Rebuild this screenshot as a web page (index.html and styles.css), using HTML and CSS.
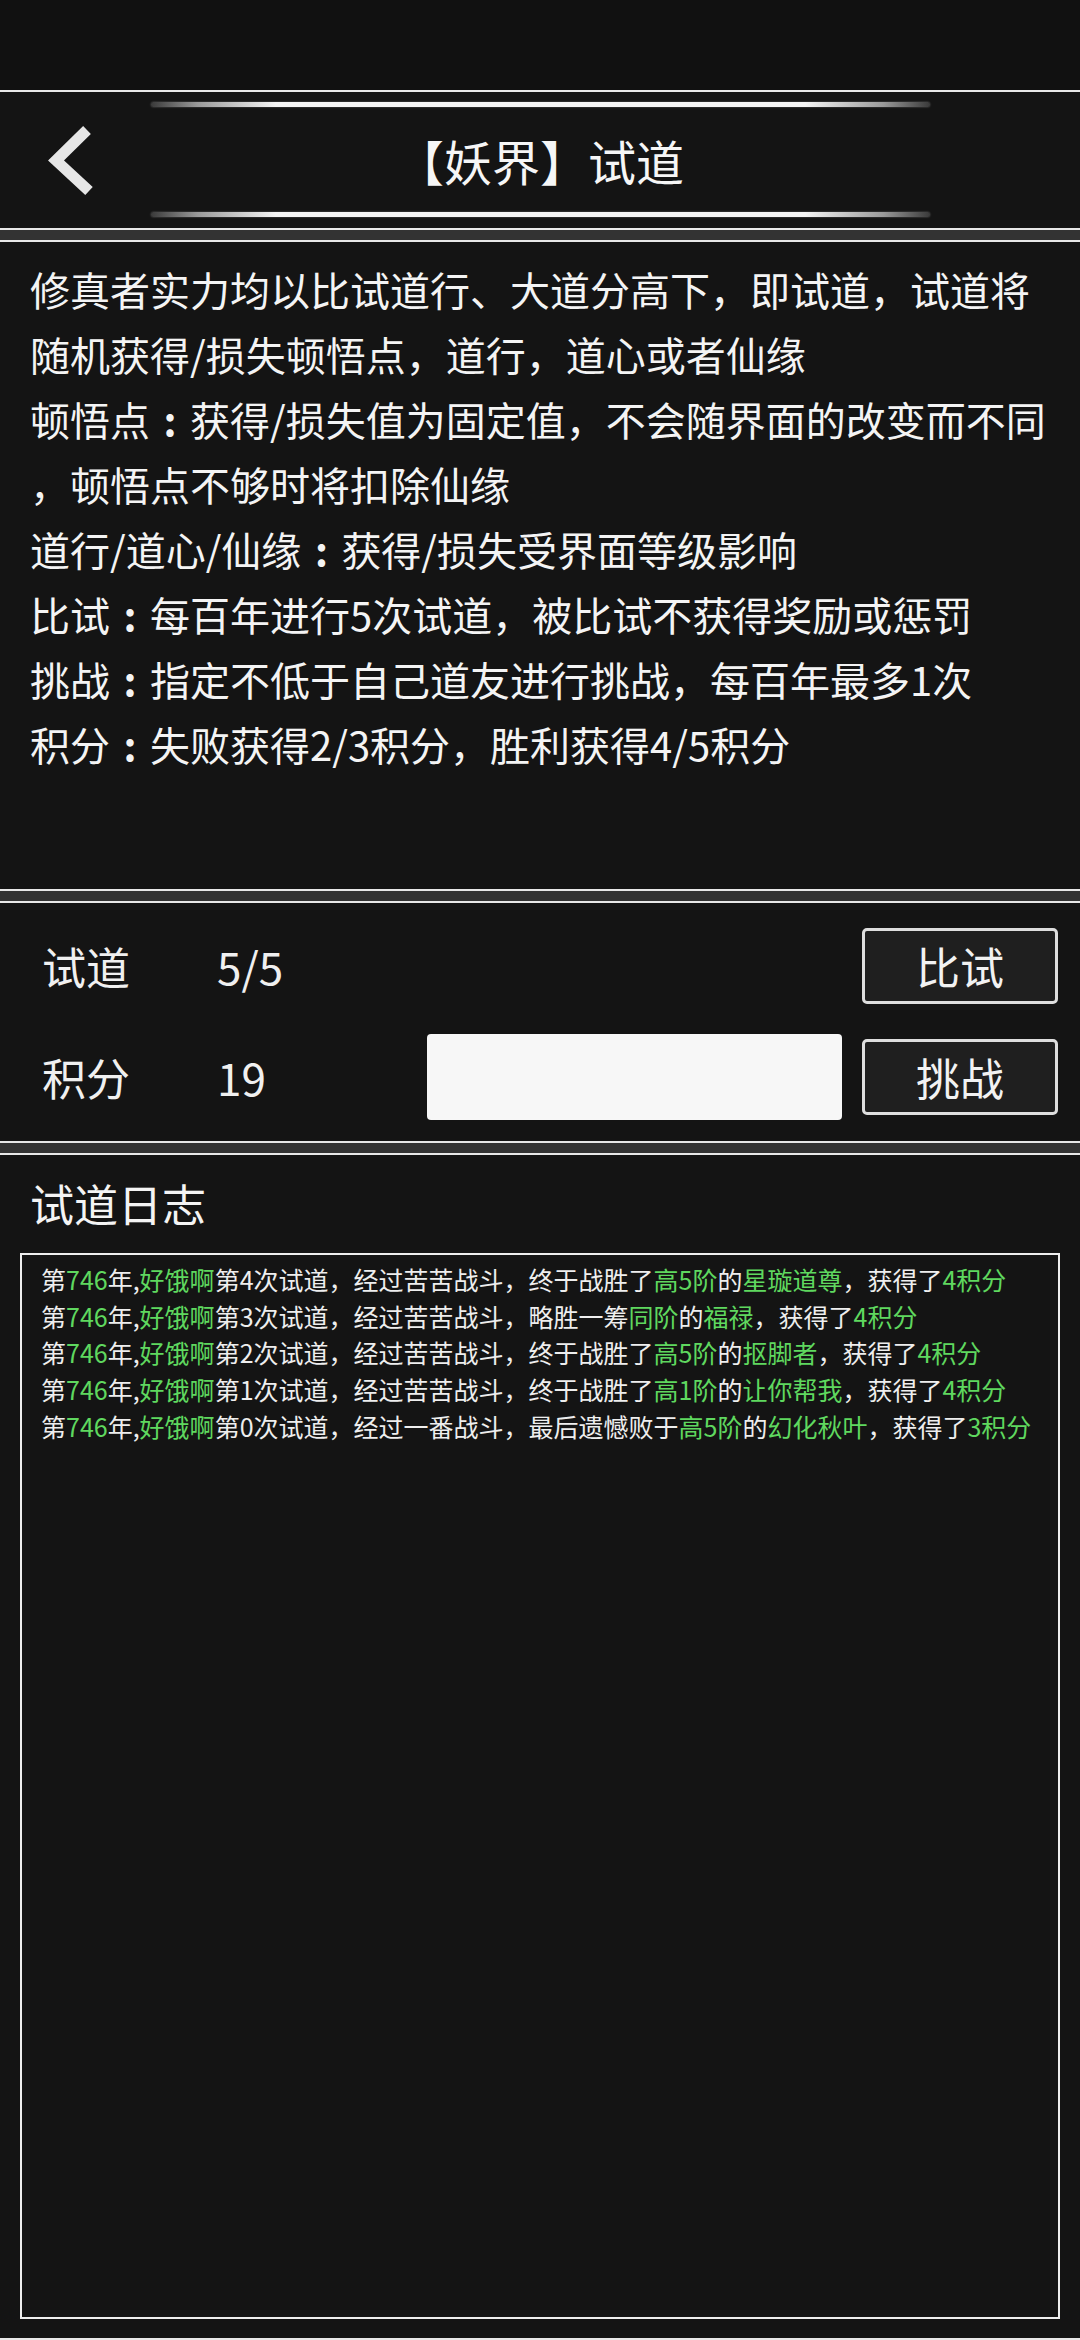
FILE: index.html
```html
<!DOCTYPE html>
<html lang="zh-CN">
<head>
  <meta charset="UTF-8">
  <meta name="viewport" content="width=device-width, initial-scale=1.0">
  <title>【妖界】试道</title>
  <link rel="stylesheet" href="styles.css">
</head>
<body>
  <div class="status-bar"></div>
  <div class="screen">
    <header class="panel title-panel">
      <div class="glow-line"></div>
      <div class="title-row">
        <svg class="back" width="60" height="80" viewBox="0 0 60 80">
          <polyline points="49,10 18,40.5 51,71" fill="none" stroke="#e6e6e6" stroke-width="11" stroke-linejoin="miter"/>
        </svg>
        <h1>【妖界】试道</h1>
        <span></span>
      </div>
      <div class="glow-line"></div>
    </header>

    <section class="panel rules">
      <p>修真者实力均以比试道行、大道分高下，即试道，试道将</p>
      <p>随机获得/损失顿悟点，道行，道心或者仙缘</p>
      <p>顿悟点<span class="colon">:</span>获得/损失值为固定值，不会随界面的改变而不同</p>
      <p>，顿悟点不够时将扣除仙缘</p>
      <p>道行/道心/仙缘<span class="colon">:</span>获得/损失受界面等级影响</p>
      <p>比试<span class="colon">:</span>每百年进行5次试道，被比试不获得奖励或惩罚</p>
      <p>挑战<span class="colon">:</span>指定不低于自己道友进行挑战，每百年最多1次</p>
      <p>积分<span class="colon">:</span>失败获得2/3积分，胜利获得4/5积分</p>
    </section>

    <section class="panel stats">
      <div class="stat-row">
        <span class="stat-label">试道</span>
        <span class="stat-value">5/5</span>
        <button class="action">比试</button>
      </div>
      <div class="stat-row">
        <span class="stat-label">积分</span>
        <span class="stat-value">19</span>
        <input type="text" class="target-input">
        <button class="action">挑战</button>
      </div>
    </section>

    <section class="panel log">
      <h2>试道日志</h2>
      <div class="log-box">
        <p>第<em>746</em>年,<em>好饿啊</em>第4次试道，经过苦苦战斗，终于战胜了<em>高5阶</em>的<em>星璇道尊</em>，获得了<em>4积分</em></p>
        <p>第<em>746</em>年,<em>好饿啊</em>第3次试道，经过苦苦战斗，略胜一筹<em>同阶</em>的<em>福禄</em>，获得了<em>4积分</em></p>
        <p>第<em>746</em>年,<em>好饿啊</em>第2次试道，经过苦苦战斗，终于战胜了<em>高5阶</em>的<em>抠脚者</em>，获得了<em>4积分</em></p>
        <p>第<em>746</em>年,<em>好饿啊</em>第1次试道，经过苦苦战斗，终于战胜了<em>高1阶</em>的<em>让你帮我</em>，获得了<em>4积分</em></p>
        <p>第<em>746</em>年,<em>好饿啊</em>第0次试道，经过一番战斗，最后遗憾败于<em>高5阶</em>的<em>幻化秋叶</em>，获得了<em>3积分</em></p>
      </div>
    </section>
  </div>
</body>
</html>
```

FILE: styles.css
```css
body {
  margin: 0;
  width: 1080px;
  height: 2340px;
  overflow: hidden;
  background: #111;
  color: #f0f0f0;
  font-family: "Noto Sans CJK SC", "Noto Sans", sans-serif;
  display: flex;
  flex-direction: column;
}
.status-bar {
  height: 90px;
  background: #111;
}
.screen {
  flex: 1;
  display: flex;
  flex-direction: column;
  gap: 10px;
  background: #333;
}
.panel {
  background: #141414;
  border-top: 2px solid #e8e8e8;
  border-bottom: 2px solid #e8e8e8;
  box-sizing: border-box;
}

/* header */
.title-panel {
  height: 140px;
  padding: 10px 0 11px;
  display: flex;
  flex-direction: column;
}
.glow-line {
  width: 779px;
  height: 5px;
  margin: 0 auto;
  border-radius: 3px;
  background: linear-gradient(90deg, #3a3a3a 0%, #9a9a9a 6%, #f4f4f4 16%, #f4f4f4 84%, #9a9a9a 94%, #3a3a3a 100%);
  box-shadow: 0 0 2px rgba(255, 255, 255, 0.35);
}
.title-row {
  flex: 1;
  display: grid;
  grid-template-columns: 1fr auto 1fr;
  align-items: center;
}
.back {
  display: block;
  margin-left: 38px;
}
h1 {
  margin: 0;
  font-size: 48px;
  font-weight: 400;
  color: #f6f6f6;
  line-height: 60px;
}

/* rules */
.rules {
  height: 651px;
  padding: 15px 30px 0;
}
.rules p {
  margin: 0;
  font-size: 40px;
  line-height: 65px;
  white-space: nowrap;
  color: #f4f4f4;
}
.colon {
  display: inline-block;
  width: 1em;
  text-align: center;
  font-weight: 700;
}

/* stats */
.stats {
  height: 242px;
  padding: 25px 22px 0 42px;
  display: flex;
  flex-direction: column;
  gap: 30px;
}
.stat-row {
  display: flex;
  align-items: center;
}
.stat-label {
  width: 175px;
  font-size: 44px;
  line-height: 60px;
}
.stat-value {
  flex: 1;
  font-size: 44px;
  line-height: 60px;
}
.target-input {
  width: 415px;
  height: 86px;
  margin: 0 20px 0 0;
  padding: 0;
  border: none;
  border-radius: 4px;
  background: #f7f7f7;
  box-sizing: border-box;
}
.action {
  width: 196px;
  height: 76px;
  padding: 0;
  border: 3px solid #dedede;
  border-radius: 5px;
  background: #1f1f1f;
  color: #f2f2f2;
  font-family: inherit;
  font-size: 44px;
  line-height: 1;
  box-sizing: border-box;
}

/* log */
.log {
  flex: 1;
  padding: 18px 20px 0;
  display: flex;
  flex-direction: column;
}
h2 {
  margin: 0 0 20px 10px;
  font-size: 44px;
  font-weight: 400;
  line-height: 60px;
  color: #f4f4f4;
}
.log-box {
  height: 1066px;
  border: 2px solid #eee;
  padding: 6px 19px;
  box-sizing: border-box;
}
.log-box p {
  margin: 0;
  font-size: 25px;
  line-height: 36.7px;
  white-space: nowrap;
  color: #eee;
}
.log-box em {
  font-style: normal;
  color: #5fd85f;
}
```
